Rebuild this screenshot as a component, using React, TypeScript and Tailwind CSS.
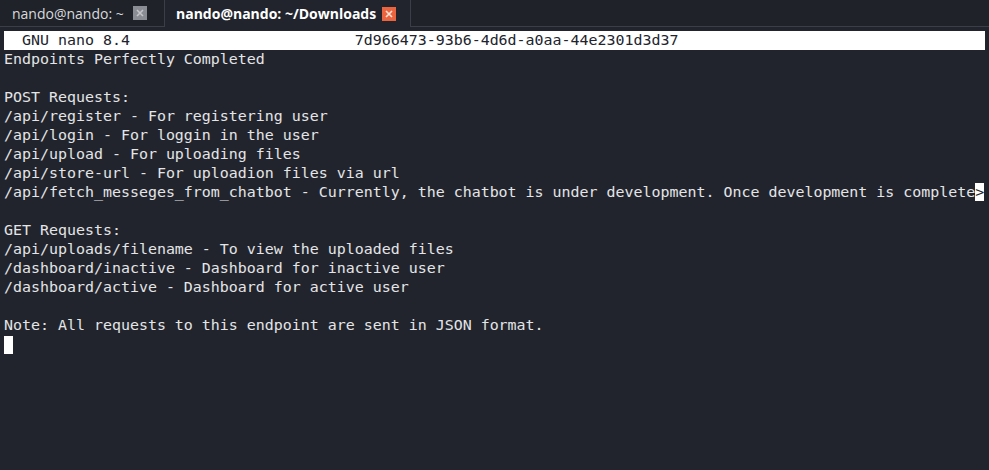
import React from 'react';

const mono = { fontFamily: '"DejaVu Sans Mono", "Liberation Mono", monospace' };

const lines: string[] = [
  'Endpoints Perfectly Completed',
  '',
  'POST Requests:',
  '/api/register - For registering user',
  '/api/login - For loggin in the user',
  '/api/upload - For uploading files',
  '/api/store-url - For uploadion files via url',
  '__FETCH__',
  '',
  'GET Requests:',
  '/api/uploads/filename - To view the uploaded files',
  '/dashboard/inactive - Dashboard for inactive user',
  '/dashboard/active - Dashboard for active user',
  '',
  'Note: All requests to this endpoint are sent in JSON format.',
];

function CloseBox({ active }: { active?: boolean }) {
  return (
    <span
      className={`flex h-[14px] w-[14px] items-center justify-center ${
        active ? 'bg-[#e9643f]' : 'bg-[#8a8d93]'
      }`}
    >
      <svg width="8" height="8" viewBox="0 0 8 8">
        <path
          d="M1 1L7 7M7 1L1 7"
          stroke={active ? '#fde3d8' : '#c4c6ca'}
          strokeWidth="1.6"
        />
      </svg>
    </span>
  );
}

export default function App() {
  return (
    <div className="flex h-[470px] w-[989px] flex-col overflow-hidden bg-[#21242c]">
      {/* tabs */}
      <div
        className="flex h-[27px] shrink-0 bg-[#1f2229] text-[14px]"
        style={{ fontFamily: '"Open Sans", "Noto Sans", sans-serif' }}
      >
        <div className="flex w-[165px] items-center gap-[9px] border-b border-r border-[#3b3e46] pl-[12px] text-[#d8d9db]">
          <span>nando@nando: ~</span>
          <CloseBox />
        </div>
        <div className="flex w-[246px] items-center gap-[6px] border-r border-[#3b3e46] bg-[#21242c] pl-[11px] font-bold text-white">
          <span>nando@nando: ~/Downloads</span>
          <CloseBox active />
        </div>
        <div className="flex-1 border-b border-[#3b3e46]" />
      </div>

      {/* terminal */}
      <div
        className="whitespace-pre px-[4px] pt-[4px] text-[14.95px] leading-[19px] text-[#e4e5e7]"
        style={mono}
      >
        <div className="mr-[0px] w-[981px] bg-white text-[#21242c]">
          {'  GNU nano 8.4                         7d966473-93b6-4d6d-a0aa-44e2301d3d37'}
        </div>
        {lines.map((l, i) =>
          l === '__FETCH__' ? (
            <div key={i}>
              {'/api/fetch_messeges_from_chatbot - Currently, the chatbot is under development. Once development is complete'}
              <span className="bg-white text-[#21242c]">{'>'}</span>
            </div>
          ) : (
            <div key={i}>{l === '' ? ' ' : l}</div>
          ),
        )}
        <div className="flex h-[19px] items-center">
          <span className="h-[18px] w-[9px] bg-white" />
        </div>
      </div>
    </div>
  );
}
